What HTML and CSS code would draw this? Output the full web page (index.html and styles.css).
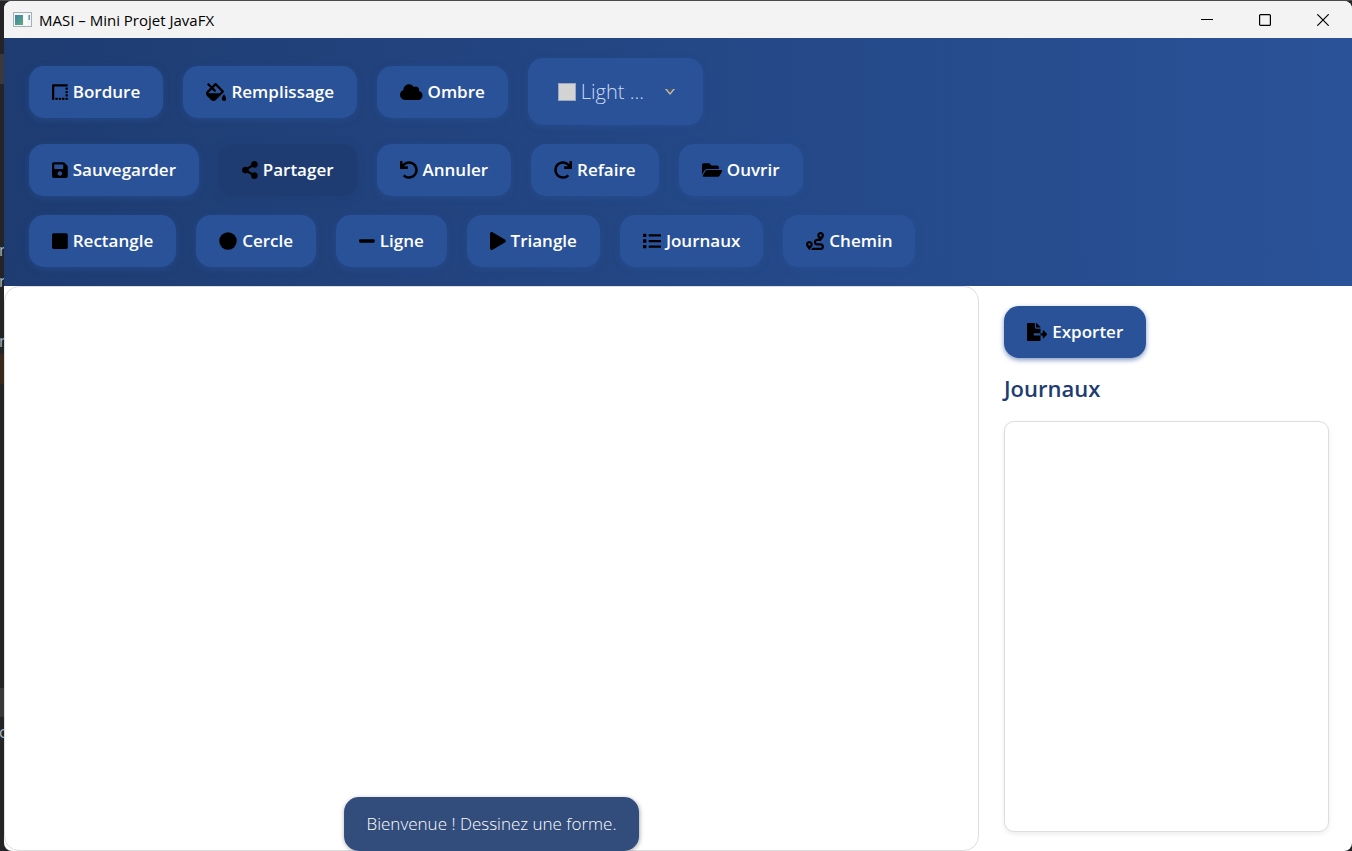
FILE: index.html
```html
<!DOCTYPE html>
<html lang="fr">
<head>
<meta charset="utf-8">
<title>MASI – Mini Projet JavaFX</title>
<link rel="stylesheet" href="styles.css">
</head>
<body>
<div class="desktop">
  <div class="behind" aria-hidden="true">
    <span class="behind-band band-tab"></span>
    <span class="behind-band band-warm"></span>
    <span class="behind-band band-row"></span>
    <span class="behind-text text-a">m</span>
    <span class="behind-text text-b">n</span>
    <span class="behind-text text-c">m</span>
    <span class="behind-text text-d">c</span>
  </div>
  <div class="window">
    <header class="titlebar">
      <svg class="app-icon" viewBox="0 0 19 16" aria-hidden="true">
        <defs><linearGradient id="pane" x1="0" y1="0" x2="1" y2="1"><stop offset="0" stop-color="#3f7fa8"/><stop offset="1" stop-color="#5fae7c"/></linearGradient></defs>
        <rect x=".5" y=".5" width="18" height="14" fill="#f4f5f6" stroke="#a9b0b5"/>
        <rect x="2" y="3" width="8" height="10" fill="url(#pane)"/>
        <rect x="11" y="3" width="3" height="10" fill="#fff"/>
        <rect x="15.500" y="3" width="1.500" height="5" fill="#5c9aa8"/>
      </svg>
      <h1 class="title">MASI – Mini Projet JavaFX</h1>
      <div class="window-controls">
        <button class="window-button" type="button" aria-label="Réduire"><svg viewBox="0 0 12 12"><path d="M0 5.500h12"/></svg></button>
        <button class="window-button" type="button" aria-label="Agrandir"><svg viewBox="0 0 12 12"><rect x=".6" y=".6" width="10.800" height="10.800" rx="1"/></svg></button>
        <button class="window-button" type="button" aria-label="Fermer"><svg viewBox="0 0 12 12"><path d="M.3.3l11.400 11.400M11.700.3L.3 11.700"/></svg></button>
      </div>
    </header>

    <nav class="toolbar" aria-label="Outils">
      <div class="tool-row">
        <button class="tool" type="button"><svg class="icon" viewBox="0 0 448 512"><path d="M432 32H32A32 32 0 0 0 0 64v400a16 16 0 0 0 16 16h32a16 16 0 0 0 16-16V96h368a16 16 0 0 0 16-16V48a16 16 0 0 0-16-16z"/><rect x="96" y="416" width="64" height="64" rx="16"/><rect x="192" y="416" width="64" height="64" rx="16"/><rect x="288" y="416" width="64" height="64" rx="16"/><rect x="384" y="416" width="64" height="64" rx="16"/><rect x="384" y="320" width="64" height="64" rx="16"/><rect x="384" y="224" width="64" height="64" rx="16"/><rect x="384" y="128" width="64" height="64" rx="16"/></svg>Bordure</button>
        <button class="tool" type="button"><svg class="icon" viewBox="0 0 576 512"><path d="M512 320s-64 92.650-64 128c0 35.350 28.660 64 64 64s64-28.650 64-64-64-128-64-128zm-9.370-102.940L294.940 9.370C288.690 3.120 280.500 0 272.310 0s-16.380 3.120-22.620 9.370l-81.580 81.580L81.930 4.760c-6.250-6.250-16.380-6.250-22.620 0L36.690 27.380c-6.240 6.250-6.240 16.380 0 22.620l86.190 86.180-94.760 94.760c-37.490 37.480-37.490 98.260 0 135.750l117.190 117.190c18.740 18.740 43.310 28.120 67.870 28.120 24.570 0 49.130-9.370 67.870-28.120l221.570-221.570c12.500-12.500 12.500-32.750.01-45.250zm-116.220 70.970H65.930c1.360-3.840 3.570-7.980 7.430-11.830l13.150-13.150 81.610-81.610 58.600 58.600c12.490 12.490 32.750 12.490 45.240 0s12.490-32.750 0-45.240l-58.600-58.600 58.950-58.950 162.440 162.440-48.340 48.340z"/></svg>Remplissage</button>
        <button class="tool" type="button"><svg class="icon" viewBox="0 0 640 512"><path d="M537.600 226.600c4.100-10.700 6.400-22.400 6.400-34.600 0-53-43-96-96-96-19.700 0-38.100 6-53.300 16.200C367 64.200 315.300 32 256 32c-88.400 0-160 71.600-160 160 0 2.700.1 5.400.2 8.100C40.200 219.800 0 273.200 0 336c0 79.500 64.500 144 144 144h368c70.700 0 128-57.300 128-128 0-61.900-44-113.600-102.400-125.400z"/></svg>Ombre</button>
        <label class="color-picker">
          <span class="swatch"></span>
          <select class="color-select" aria-label="Couleur"><option>Light ...</option></select>
          <svg class="chevron" viewBox="0 0 10 6" aria-hidden="true"><path d="M0 0h10L5 6z" fill="#c9bfae"/><path d="M1.800 0h6.400L5 4z" fill="#4a5668"/></svg>
        </label>
      </div>
      <div class="tool-row">
        <button class="tool" type="button"><svg class="icon" viewBox="0 0 448 512"><path d="M433.941 129.941l-83.882-83.882A48 48 0 0 0 316.118 32H48C21.490 32 0 53.490 0 80v352c0 26.510 21.490 48 48 48h352c26.510 0 48-21.490 48-48V163.882a48 48 0 0 0-14.059-33.941zM224 416c-35.346 0-64-28.654-64-64 0-35.346 28.654-64 64-64s64 28.654 64 64c0 35.346-28.654 64-64 64zm96-304.520V212c0 6.627-5.373 12-12 12H76c-6.627 0-12-5.373-12-12V108c0-6.627 5.373-12 12-12h228.520c3.183 0 6.235 1.264 8.485 3.515l3.480 3.480A11.996 11.996 0 0 1 320 111.480z"/></svg>Sauvegarder</button>
        <button class="tool tool-active" type="button"><svg class="icon" viewBox="0 0 448 512"><path d="M352 320c-22.608 0-43.387 7.819-59.790 20.895l-102.486-64.054a96.551 96.551 0 0 0 0-41.683l102.486-64.054C308.613 184.181 329.392 192 352 192c53.019 0 96-42.981 96-96S405.019 0 352 0s-96 42.981-96 96c0 7.158.79 14.130 2.276 20.841L155.790 180.895C139.387 167.819 118.608 160 96 160c-53.019 0-96 42.981-96 96s42.981 96 96 96c22.608 0 43.387-7.819 59.790-20.895l102.486 64.054A96.301 96.301 0 0 0 256 416c0 53.019 42.981 96 96 96s96-42.981 96-96-42.981-96-96-96z"/></svg>Partager</button>
        <button class="tool" type="button"><svg class="icon" viewBox="0 0 512 512"><path d="M212.333 224.333H12c-6.627 0-12-5.373-12-12V12C0 5.373 5.373 0 12 0h48c6.627 0 12 5.373 12 12v78.112C117.773 39.279 184.260 7.470 258.175 8.007c136.906.994 246.448 111.623 246.157 248.532C504.041 393.258 393.120 504 256.333 504c-64.089 0-122.496-24.313-166.510-64.215-5.099-4.622-5.334-12.554-.467-17.420l33.967-33.967c4.474-4.474 11.662-4.717 16.401-.525C170.760 415.336 211.580 432 256.333 432c97.268 0 176-78.716 176-176 0-97.267-78.716-176-176-176-58.496 0-110.280 28.476-142.274 72.333h98.274c6.627 0 12 5.373 12 12v48c0 6.627-5.373 12-12 12z"/></svg>Annuler</button>
        <button class="tool" type="button"><svg class="icon" viewBox="0 0 512 512"><path transform="translate(512 0) scale(-1 1)" d="M212.333 224.333H12c-6.627 0-12-5.373-12-12V12C0 5.373 5.373 0 12 0h48c6.627 0 12 5.373 12 12v78.112C117.773 39.279 184.260 7.470 258.175 8.007c136.906.994 246.448 111.623 246.157 248.532C504.041 393.258 393.120 504 256.333 504c-64.089 0-122.496-24.313-166.510-64.215-5.099-4.622-5.334-12.554-.467-17.420l33.967-33.967c4.474-4.474 11.662-4.717 16.401-.525C170.760 415.336 211.580 432 256.333 432c97.268 0 176-78.716 176-176 0-97.267-78.716-176-176-176-58.496 0-110.280 28.476-142.274 72.333h98.274c6.627 0 12 5.373 12 12v48c0 6.627-5.373 12-12 12z"/></svg>Refaire</button>
        <button class="tool" type="button"><svg class="icon" viewBox="0 0 576 512"><path d="M572.694 292.093L500.270 416.248A63.997 63.997 0 0 1 444.989 448H45.025c-18.523 0-30.064-20.093-20.731-36.093l72.424-124.155A64 64 0 0 1 152 256h399.964c18.523 0 30.064 20.093 20.730 36.093zM152 224h328v-48c0-26.510-21.490-48-48-48H272l-64-64H48C21.490 64 0 85.490 0 112v278.046l69.077-118.418C86.214 242.250 117.989 224 152 224z"/></svg>Ouvrir</button>
      </div>
      <div class="tool-row">
        <button class="tool" type="button"><svg class="icon" viewBox="0 0 448 512"><rect y="32" width="448" height="448" rx="48"/></svg>Rectangle</button>
        <button class="tool" type="button"><svg class="icon" viewBox="0 0 512 512"><circle cx="256" cy="256" r="248"/></svg>Cercle</button>
        <button class="tool" type="button"><svg class="icon" viewBox="0 0 448 512"><rect y="208" width="448" height="96" rx="32"/></svg>Ligne</button>
        <button class="tool" type="button"><svg class="icon" viewBox="0 0 448 512"><path d="M424.400 214.700L72.400 6.600C43.800-10.300 0 6.100 0 47.900V464c0 37.500 40.700 60.100 72.400 41.300l352-208c31.400-18.500 31.500-64.100 0-82.600z"/></svg>Triangle</button>
        <button class="tool" type="button"><svg class="icon" viewBox="0 0 512 512"><rect y="48" width="96" height="96" rx="16"/><rect y="208" width="96" height="96" rx="16"/><rect y="368" width="96" height="96" rx="16"/><rect x="160" y="64" width="352" height="64" rx="16"/><rect x="160" y="224" width="352" height="64" rx="16"/><rect x="160" y="384" width="352" height="64" rx="16"/></svg>Journaux</button>
        <button class="tool" type="button"><svg class="icon" viewBox="0 0 512 512"><path d="M416 320h-96c-17.600 0-32-14.400-32-32s14.400-32 32-32h96s96-107 96-160-43-96-96-96-96 43-96 96c0 25.500 22.200 63.400 45.300 96H320c-52.900 0-96 43.100-96 96s43.100 96 96 96h96c17.600 0 32 14.400 32 32s-14.400 32-32 32H185.500c-16 24.800-33.800 47.700-47.300 64H416c52.900 0 96-43.100 96-96s-43.100-96-96-96zm0-256c17.700 0 32 14.300 32 32s-14.300 32-32 32-32-14.300-32-32 14.300-32 32-32zM96 256c-53 0-96 43-96 96s96 160 96 160 96-107 96-160-43-96-96-96zm0 128c-17.700 0-32-14.300-32-32s14.300-32 32-32 32 14.300 32 32-14.300 32-32 32z"/></svg>Chemin</button>
      </div>
    </nav>

    <div class="workspace">
      <main class="canvas" aria-label="Zone de dessin">
        <p class="status" role="status">Bienvenue ! Dessinez une forme.</p>
      </main>
      <aside class="side">
        <button class="tool" type="button"><svg class="icon" viewBox="0 0 576 512"><path d="M384 121.900c0-6.300-2.500-12.400-7-16.900L279.100 7c-4.500-4.500-10.600-7-17-7H256v128h128zM571 308l-95.700-96.400c-10.100-10.100-27.400-3-27.400 11.300V288h-64v64h64v65.200c0 14.300 17.300 21.400 27.400 11.300L571 332c6.600-6.600 6.600-17.400 0-24zm-379 28v-32c0-8.800 7.200-16 16-16h176V160H248c-13.200 0-24-10.800-24-24V0H24C10.700 0 0 10.700 0 24v464c0 13.300 10.700 24 24 24h336c13.300 0 24-10.700 24-24V352H208c-8.800 0-16-7.200-16-16z"/></svg>Exporter</button>
        <h2 class="side-title">Journaux</h2>
        <div class="log-list"></div>
      </aside>
    </div>
  </div>
</div>
</body>
</html>
```
FILE: styles.css
```css
* {
  box-sizing: border-box;
}

body {
  margin: 0;
  font-family: "Open Sans", "Noto Sans", sans-serif;
}

.desktop {
  display: grid;
  grid-template-columns: 4px 1fr;
  min-height: 100vh;
  padding-top: 1px;
  background: linear-gradient(#4a484a 1px, #242426 1px);
}

/* Sliver of the editor that shows beside the window */
.behind {
  position: relative;
  overflow: hidden;
  background: #242426;
}

.behind-band,
.behind-text {
  position: absolute;
  left: 0;
}

.behind-band {
  width: 100%;
}

.band-tab {
  top: 53px;
  height: 30px;
  background: #3a3a3c;
}

.band-warm {
  top: 353px;
  height: 30px;
  background: #39291a;
}

.band-row {
  top: 687px;
  height: 29px;
  background: #38383a;
}

.behind-text {
  left: -1px;
  color: #a9b7c6;
  font-size: 16px;
  line-height: 20px;
}

.text-a { top: 239px; }
.text-b { top: 270px; }
.text-c { top: 330px; }
.text-d { top: 721px; }

.window {
  display: flex;
  flex-direction: column;
  overflow: hidden;
  background: #fff;
  border-radius: 8px;
}

.titlebar {
  display: flex;
  align-items: center;
  height: 37px;
  padding-left: 9px;
  background: #f3f3f3;
}

.app-icon {
  width: 19px;
  height: 16px;
}

.title {
  flex: 1;
  margin: 0 0 0 7px;
  color: #000;
  font-size: 15px;
  font-weight: 400;
}

.window-controls {
  display: flex;
}

.window-button {
  display: grid;
  place-items: center;
  width: 58px;
  height: 37px;
  padding: 0;
  background: none;
  border: 0;
}

.window-button svg {
  width: 12px;
  height: 12px;
  fill: none;
  stroke: #000;
  stroke-width: 1.200;
}

.toolbar {
  display: flex;
  flex-direction: column;
  gap: 19px;
  padding: 20px 25px 19px;
  background: linear-gradient(to right, #1e3c72, #2a5298);
}

.tool-row {
  display: flex;
  align-items: center;
  gap: 20px;
}

.tool {
  display: flex;
  align-items: center;
  gap: 5px;
  padding: 14px 23px;
  color: #fff;
  background: #2a5298;
  border: 0;
  border-radius: 15px;
  box-shadow: 0 2px 6px rgba(42, 82, 152, 0.5);
  font-family: inherit;
  font-size: 17px;
  font-weight: 650;
  line-height: 24px;
}

.tool-active {
  background: #1e3c72;
  box-shadow: 0 2px 8px rgba(30, 60, 114, 0.5);
}

.icon {
  height: 18px;
  fill: #000;
}

.color-picker {
  display: flex;
  align-items: center;
  width: 175px;
  height: 67px;
  padding: 0 28px 0 31px;
  background: #2a5298;
  border-radius: 15px;
  box-shadow: 0 2px 6px rgba(42, 82, 152, 0.5);
}

.swatch {
  width: 16px;
  height: 16px;
  background: #d3d3d3;
  box-shadow: 0 0 0 1px #9ba8bd;
}

.color-select {
  flex: 1;
  min-width: 0;
  margin-left: 6px;
  padding: 0;
  color: #c9d9f5;
  background: none;
  border: 0;
  appearance: none;
  font-family: inherit;
  font-size: 20px;
  font-weight: 300;
}

.chevron {
  width: 10px;
  height: 6px;
}

.workspace {
  display: grid;
  flex: 1;
  grid-template-columns: 975fr 373fr;
}

.canvas {
  position: relative;
  background: #fff;
  border: 1px solid #ddd;
  border-radius: 15px;
}

.status {
  position: absolute;
  bottom: -1px;
  left: 50%;
  margin: 0;
  padding: 15px 23px;
  color: #fff;
  background: #324c7c;
  border-radius: 15px;
  box-shadow: 0 1px 4px rgba(0, 0, 0, 0.3);
  font-size: 17px;
  font-weight: 300;
  line-height: 24px;
  white-space: nowrap;
  transform: translateX(-50%);
}

.side {
  display: flex;
  flex-direction: column;
  align-items: flex-start;
  padding: 20px 23px 19px 25px;
}

.side .tool {
  box-shadow: 0 2px 5px rgba(42, 82, 152, 0.6);
}

.side-title {
  margin: 14px 0 16px;
  color: #1e3c72;
  font-size: 22px;
  font-weight: 650;
  line-height: 33px;
}

.log-list {
  flex: 1;
  width: 100%;
  background: #fff;
  border: 1px solid #ddd;
  border-radius: 10px;
  box-shadow: 0 2px 5px rgba(0, 0, 0, 0.08);
}
```
